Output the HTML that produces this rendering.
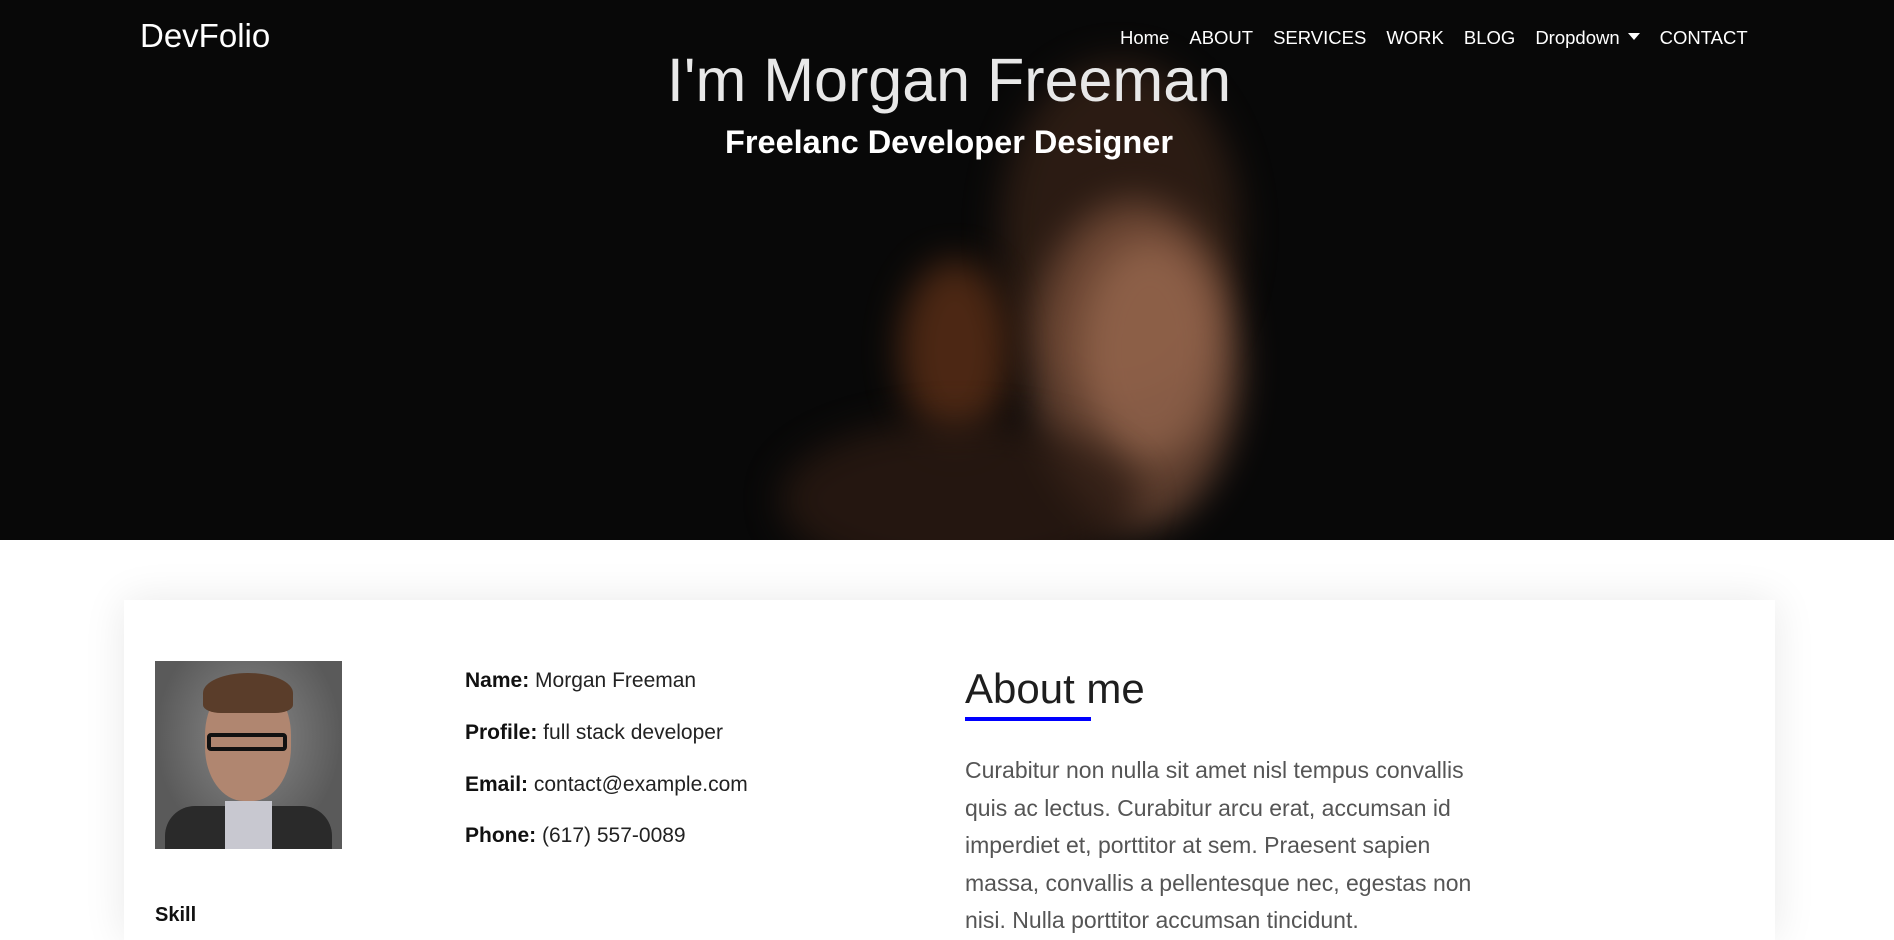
<!DOCTYPE html>
<html><head><meta charset="utf-8"><style>
*{margin:0;padding:0;box-sizing:border-box}
body{width:1894px;height:912px;overflow:hidden;background:#fff;font-family:"Liberation Sans",sans-serif;position:relative}
.hero{position:absolute;left:0;top:0;width:1894px;height:540px;background:#080808;overflow:hidden}
.blob{position:absolute;border-radius:50%;filter:blur(18px)}
.brand{position:absolute;left:140px;top:17px;color:#fff;font-size:33px}
.nav{position:absolute;left:1120px;top:27px;color:#fff;font-size:18.5px;display:flex;gap:20px;white-space:nowrap}
.caret{display:inline-block;width:0;height:0;border-left:6px solid transparent;border-right:6px solid transparent;border-top:7px solid #fff;vertical-align:4px;margin-left:8px}
h1{position:absolute;left:0;width:1898px;text-align:center;top:45px;color:#e8e8e8;font-size:61px;font-weight:normal}
h2{position:absolute;left:0;width:1898px;text-align:center;top:124px;color:#fff;font-size:32.5px;font-weight:bold}
.card{position:absolute;left:124px;top:600px;width:1651px;height:340px;background:#fff;box-shadow:0 0 40px rgba(0,0,0,.09)}
.photo{position:absolute;left:155px;top:661px;width:187px;height:188px;background:radial-gradient(ellipse at 50% 40%,#8a8a8a,#5a5a5a 70%);overflow:hidden}
.info{position:absolute;left:465px;color:#222;font-size:21px}
.info b{color:#111}
.about{position:absolute;left:965px;top:665px;font-size:42px;color:#1e1e1e}
.bar{position:absolute;left:965px;top:717px;width:126px;height:4px;background:#0000ff}
.p{position:absolute;left:965px;top:752px;font-size:23px;line-height:37.5px;color:#555;white-space:nowrap}
.skill{position:absolute;left:155px;top:904px;font-weight:bold;font-size:20px;color:#111}
</style></head><body>
<div class="hero">
  <div class="blob" style="left:1000px;top:60px;width:240px;height:340px;background:#3a2418;opacity:.7"></div>
  <div class="blob" style="left:1030px;top:200px;width:210px;height:330px;background:#8a5a42;opacity:.65"></div>
  <div class="blob" style="left:1080px;top:240px;width:140px;height:220px;background:#b07a5e;opacity:.5"></div>
  <div class="blob" style="left:900px;top:260px;width:110px;height:180px;background:#7a3d1c;opacity:.6"></div>
  <div class="blob" style="left:780px;top:420px;width:360px;height:160px;background:#2b1a12;opacity:.8"></div>
  <div class="brand">DevFolio</div>
  <div class="nav"><span>Home</span><span>ABOUT</span><span>SERVICES</span><span>WORK</span><span>BLOG</span><span>Dropdown<span class="caret"></span></span><span>CONTACT</span></div>
  <h1>I'm Morgan Freeman</h1>
  <h2>Freelanc Developer Designer</h2>
</div>
<div class="card"></div>
<div class="photo">
  <div style="position:absolute;left:50px;top:20px;width:86px;height:120px;border-radius:45%;background:#b08670"></div>
  <div style="position:absolute;left:48px;top:12px;width:90px;height:40px;border-radius:50% 50% 20% 20%;background:#5a3d2a"></div>
  <div style="position:absolute;left:52px;top:72px;width:80px;height:18px;border:4px solid #111;border-radius:4px"></div>
  <div style="position:absolute;left:10px;top:145px;width:167px;height:60px;background:#2a2a2a;border-radius:30px 30px 0 0"></div>
  <div style="position:absolute;left:70px;top:140px;width:47px;height:60px;background:#c8c8d0"></div>
</div>
<div class="info" style="top:669px"><b>Name:</b> Morgan Freeman</div>
<div class="info" style="top:721px"><b>Profile:</b> full stack developer</div>
<div class="info" style="top:773px"><b>Email:</b> contact@example.com</div>
<div class="info" style="top:824px"><b>Phone:</b> (617) 557-0089</div>
<div class="about">About me</div>
<div class="bar"></div>
<div class="p">Curabitur non nulla sit amet nisl tempus convallis<br>quis ac lectus. Curabitur arcu erat, accumsan id<br>imperdiet et, porttitor at sem. Praesent sapien<br>massa, convallis a pellentesque nec, egestas non<br>nisi. Nulla porttitor accumsan tincidunt.</div>
<div class="skill">Skill</div>
</body></html>
